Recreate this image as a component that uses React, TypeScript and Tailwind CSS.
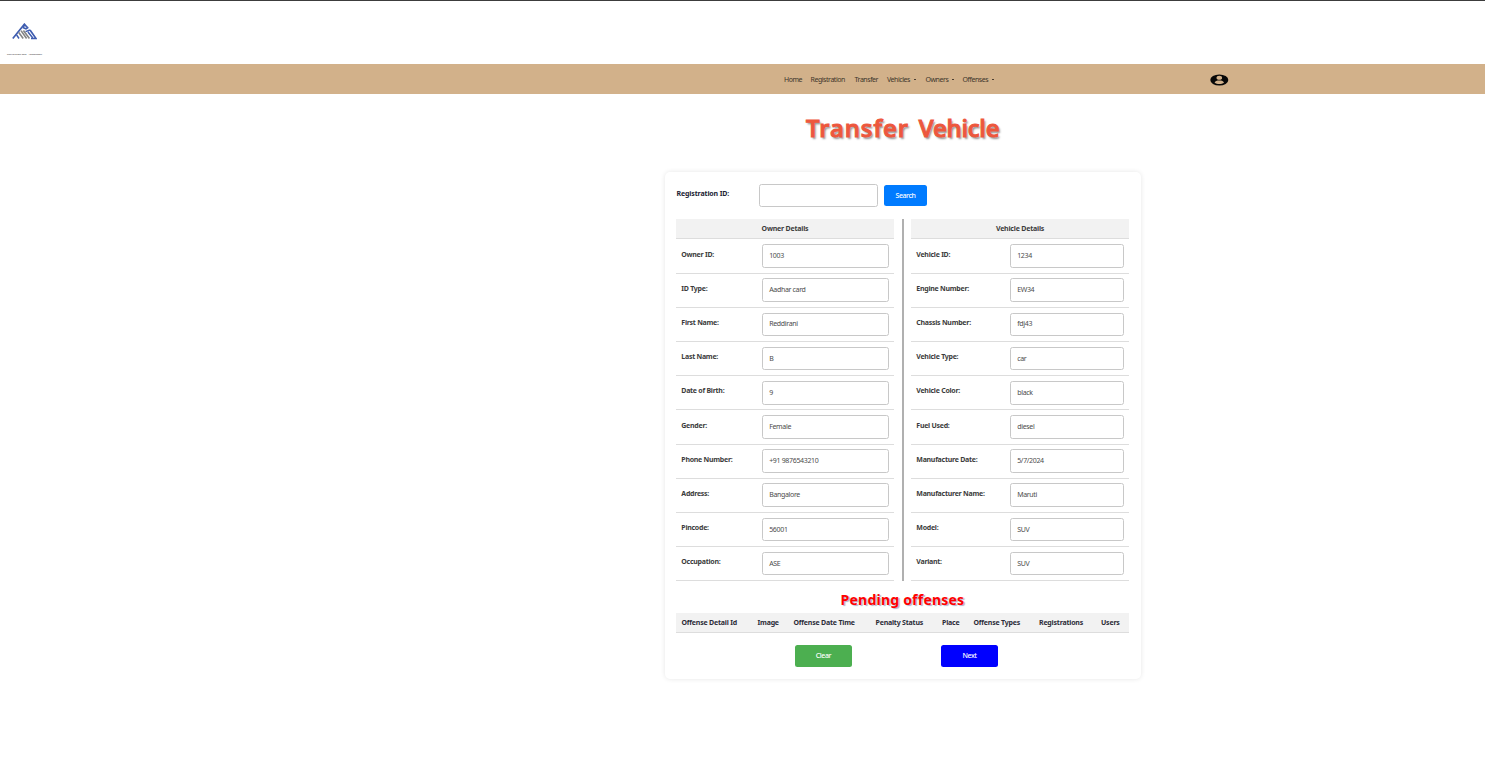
import React from "react";

type Field = { label: string; value: string };

const owner: Field[] = [
  { label: "Owner ID:", value: "1003" },
  { label: "ID Type:", value: "Aadhar card" },
  { label: "First Name:", value: "Reddirani" },
  { label: "Last Name:", value: "B" },
  { label: "Date of Birth:", value: "9" },
  { label: "Gender:", value: "Female" },
  { label: "Phone Number:", value: "+91 9876543210" },
  { label: "Address:", value: "Bangalore" },
  { label: "Pincode:", value: "56001" },
  { label: "Occupation:", value: "ASE" },
];

const vehicle: Field[] = [
  { label: "Vehicle ID:", value: "1234" },
  { label: "Engine Number:", value: "EW34" },
  { label: "Chassis Number:", value: "fdj43" },
  { label: "Vehicle Type:", value: "car" },
  { label: "Vehicle Color:", value: "black" },
  { label: "Fuel Used:", value: "diesel" },
  { label: "Manufacture Date:", value: "5/7/2024" },
  { label: "Manufacturer Name:", value: "Maruti" },
  { label: "Model:", value: "SUV" },
  { label: "Variant:", value: "SUV" },
];

const nav = [
  { label: "Home", width: "w-[26.5px]", menu: false },
  { label: "Registration", width: "w-[44px]", menu: false },
  { label: "Transfer", width: "w-[32.5px]", menu: false },
  { label: "Vehicles", width: "w-[38.5px]", menu: true },
  { label: "Owners", width: "w-[37px]", menu: true },
  { label: "Offenses", width: "w-[40px]", menu: true },
];

const columns = [
  { label: "Offense Detail Id", width: "w-[76px]" },
  { label: "Image", width: "w-[36px]" },
  { label: "Offense Date Time", width: "w-[82px]" },
  { label: "Penalty Status", width: "w-[66.5px]" },
  { label: "Place", width: "w-[31.5px]" },
  { label: "Offense Types", width: "w-[65.5px]" },
  { label: "Registrations", width: "w-[62px]" },
  { label: "Users", width: "w-[28px]" },
];

function Details({ title, rows, inputWidth }: { title: string; rows: Field[]; inputWidth: string }) {
  return (
    <section className="w-[218px]">
      <h2 className="h-[20.49px] border-b border-[#ddd] bg-[#f2f2f2] text-center text-[7px] leading-[19px] font-bold tracking-[-0.2px] text-[#3c3c3c]">
        {title}
      </h2>
      {rows.map((r) => (
        <div key={r.label} className="flex h-[34.172px] items-start justify-between border-b border-[#ddd] pr-[5px] pl-[5.3px] pt-[4.72px]">
          <span className="pt-[5.5px] text-[7px] leading-[10px] font-bold tracking-[-0.26px] whitespace-nowrap text-[#3c3c3c]">{r.label}</span>
          <div className={`${inputWidth} flex h-[23.7px] items-center rounded-[2.5px] border border-[#c8c8c8] bg-white pt-[0.7px] pl-[6.2px] text-[7px] tracking-[-0.33px] text-[#4c4c4c]`}>
            {r.value}
          </div>
        </div>
      ))}
    </section>
  );
}

function Logo() {
  return (
    <svg className="ml-[12px] h-[17px] w-[25px]" viewBox="0 0 25 17" fill="none">
      <path d="M.8 15.5 12.4 1.2l3.2 3.6M18 7l6 8.5h-5" stroke="#3f5db0" strokeWidth="1.7" />
      <path d="m12.4 1.8-1 3 2.6 1 2.4-1.4M13.5 8.6l4.5-1.6M16 9l4.8 6" stroke="#3f5db0" strokeWidth="1.5" />
      <path d="m4.6 11.8 2.4 3.7" stroke="#3f5db0" strokeWidth="1.5" />
      <path d="m6.8 9.5 4.4 6M9 7.6l5.6 7.9M11.4 7.4l6 8.1" stroke="#858585" strokeWidth="1.6" />
    </svg>
  );
}

export default function App() {
  return (
    <div className="h-[781px] w-[1485px] overflow-hidden bg-white font-['Noto_Sans','Liberation_Sans',sans-serif]">
      <header className="h-[64px] border-t border-[#3c3c3c] pt-[21.5px]">
        <Logo />
        <div className="mt-[12.5px] ml-[7px] w-[36px] text-[2.4px] leading-[4px] whitespace-nowrap text-[#333]">shutterstock.com · 1329363527</div>
      </header>
      <nav className="flex h-[30px] items-center bg-[#d2b18a] pl-[784px] text-[7px] tracking-[-0.45px] text-[#40362b]">
        {nav.map((n) => (
          <a key={n.label} className={`${n.width} flex shrink-0 items-center gap-[3.5px] pt-[1.6px] whitespace-nowrap`}>
            {n.label}
            {n.menu && <span className="h-px w-[2px] bg-[#4a3d30]" />}
          </a>
        ))}
        <svg className="mt-px ml-[207px] h-[12px] w-[19px]" viewBox="0 0 19 12">
          <ellipse cx="9.3" cy="6" rx="9" ry="5.6" fill="#080808" />
          <ellipse cx="9.3" cy="3.8" rx="2.8" ry="2" fill="#d2b18a" />
          <path d="M4.6 8.8C5 6.9 6.8 6.5 9.3 6.5S13.6 6.9 14 8.8c-2.4 1.6-7 1.6-9.4 0Z" fill="#d2b18a" />
        </svg>
      </nav>
      <main className="ml-[665px] w-[476px]">
        <h1 className="h-[78px] pt-[17px] pl-[141px] text-[24px] leading-[34px] font-medium whitespace-nowrap text-[#ed573d] [-webkit-text-stroke:1.1px_#ed573d] [text-shadow:1.5px_1.5px_2px_rgba(0,0,0,0.45)] font-['Comic_Sans_MS','Noto_Sans',sans-serif]">
          <span className="tracking-[1px] [word-spacing:2.6px]">Transfer </span>
          <span className="tracking-[-0.15px]">Vehicle</span>
        </h1>
        <div className="h-[507px] rounded-[5px] bg-white pt-[12px] pr-[12px] pl-[11px] shadow-[0_0_5px_rgba(0,0,0,0.1)]">
          <div className="flex h-[35px]">
            <label className="w-[83px] pt-[5px] pl-[0.5px] text-[7px] leading-[10px] font-bold tracking-[-0.13px] text-[#223]">Registration ID:</label>
            <input className="h-[23px] w-[119px] rounded-[2.5px] border border-[#c8c8c8]" />
            <button className="mt-px ml-[6px] h-[21px] w-[43px] rounded-[2.5px] bg-[#007bff] text-[7px] leading-[21px] font-medium tracking-[-0.4px] text-white">Search</button>
          </div>
          <div className="flex">
            <Details title="Owner Details" rows={owner} inputWidth="w-[127px]" />
            <div className="mr-[7px] ml-[8px] h-[362px] w-[2px] bg-[#b0b0b0]" />
            <Details title="Vehicle Details" rows={vehicle} inputWidth="w-[114px]" />
          </div>
          <h2 className="h-[32px] pt-[10px] text-center text-[14px] leading-[18px] font-bold tracking-[0.22px] text-[#f00] [text-shadow:1.5px_1px_1px_rgba(0,0,80,0.3)]">
            Pending offenses
          </h2>
          <div className="flex h-[20px] border-b border-[#ddd] bg-[#f2f2f2] pl-[5.5px] text-[7px] leading-[19px] font-bold tracking-[-0.2px] text-[#2c2c38]">
            {columns.map((c) => (
              <span key={c.label} className={`${c.width} shrink-0 whitespace-nowrap`}>{c.label}</span>
            ))}
          </div>
          <div className="flex gap-[89px] pt-[12px] pl-[119px] text-[7px] leading-[22px] font-medium tracking-[-0.4px] text-white">
            <button className="h-[22px] w-[57px] rounded-[2.5px] bg-[#4caf50]">Clear</button>
            <button className="h-[22px] w-[57px] rounded-[2.5px] bg-[#00f]">Next</button>
          </div>
        </div>
      </main>
    </div>
  );
}
